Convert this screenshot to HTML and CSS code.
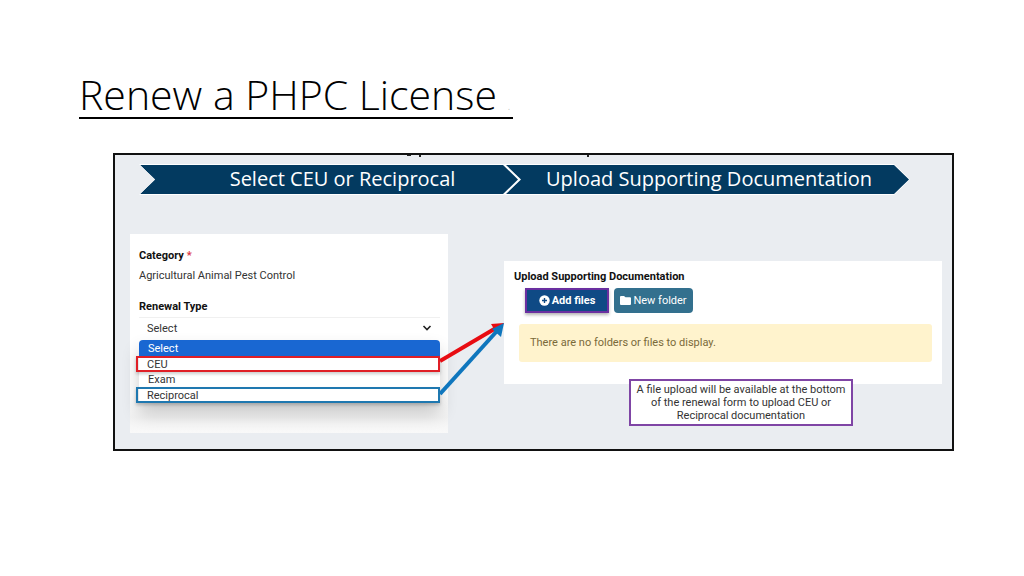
FILE: index.html
```html
<!DOCTYPE html>
<html lang="en">

<head>
    <meta charset="UTF-8">
    <meta name="viewport" content="width=device-width, initial-scale=1.0">
    <title>Renew a PHPC License</title>
    <link rel="stylesheet" href="styles.css">
  </head>
  <body>
    <h1 class="title">Renew a PHPC License <span class="title-dot">.</span></h1>

    <main class="guide">
      <svg class="cut-text" width="190" height="3" viewBox="0 0 190 3" aria-hidden="true">
        <path d="M2 0h4M15 0v2M183 0v2" stroke="#222" stroke-width="2" fill="none"/>
      </svg>

      <ol class="steps">
        <li class="step step-first"><span>Select CEU or Reciprocal</span></li>
        <li class="step step-last"><span>Upload Supporting Documentation</span></li>
      </ol>

      <div class="columns">
        <section class="card form-card">
          <p class="label">Category <span class="required">*</span></p>
          <p class="value">Agricultural Animal Pest Control</p>
          <label class="label" for="renewal">Renewal Type</label>
          <div class="select-wrap">
            <select id="renewal" class="select">
              <option>Select</option>
              <option>CEU</option>
              <option>Exam</option>
              <option>Reciprocal</option>
            </select>
            <svg class="caret" width="10" height="6" viewBox="0 0 10 6" aria-hidden="true">
              <path d="M1.5 1l3.5 3.5L8.500 1" fill="none" stroke="#222" stroke-width="1.600"/>
            </svg>
          </div>
          <div class="menu">
            <ul class="options" role="listbox" aria-label="Renewal Type">
              <li class="option option-active" role="option" aria-selected="true">Select</li>
              <li class="option option-ceu" role="option">CEU</li>
              <li class="option" role="option">Exam</li>
              <li class="option option-reciprocal" role="option">Reciprocal</li>
            </ul>
            <!-- arrows from the two marked options to the upload card -->
            <svg class="arrows" width="64" height="76" viewBox="0 0 64 76" aria-hidden="true">
              <path d="M0 38L56 5" stroke="#e80c12" stroke-width="4"/>
              <path d="M64 0L51 1L57 11z" fill="#e80c12"/>
              <path d="M0 71L57 8" stroke="#0f76bd" stroke-width="4"/>
              <path d="M64 0L52 6L61 14z" fill="#0f76bd"/>
            </svg>
          </div>
        </section>

        <div class="upload">
          <section class="card upload-card">
            <h2 class="label">Upload Supporting Documentation</h2>
            <div class="buttons">
              <button type="button" class="btn btn-add">
                <svg width="11" height="11" viewBox="0 0 11 11" aria-hidden="true">
                  <circle cx="5.500" cy="5.500" r="5.200" fill="#fff"/>
                  <path d="M5.500 3v5M3 5.500h5" stroke="#0f4a85" stroke-width="1.400"/>
                </svg>
                Add files
              </button>
              <button type="button" class="btn btn-folder">
                <svg width="11" height="9" viewBox="0 0 11 9" aria-hidden="true">
                  <path d="M1 0h3l1.500 1.300H10q1 0 1 1V8q0 1-1 1H1Q0 9 0 8V1q0-1 1-1z" fill="#fff"/>
                </svg>
                New folder
              </button>
            </div>
            <p class="empty">There are no folders or files to display.</p>
          </section>
          <p class="note">A file upload will be available at the bottom of the renewal form to upload CEU or Reciprocal documentation</p>
        </div>
      </div>
    </main>
  </body>
</html>
```
FILE: styles.css
```css
* {
  box-sizing: border-box;
}
body {
  font-family: Roboto, "Noto Sans", sans-serif;
  font-size: 11px;
  color: #333;
  background-color: #fff;
  margin: 0;
  padding: 71px 70px 0 79px;
}
h1, h2, p, ul, ol {
  margin: 0;
  padding: 0;
}
ul, ol {
  list-style: none;
}
.title {
  width: fit-content;
  padding-right: 3px;
  font-family: "Open Sans", sans-serif;
  font-size: 41px;
  font-weight: 300;
  line-height: 46px;
  color: #000;
  border-bottom: 2px solid #000;
}
.title-dot {
  font-size: 12px;
  line-height: 12px;
  color: #bbb;
}
.guide {
  position: relative;
  margin: 34px 0 0 34px;
  padding: 9px 10px 16px 15px;
  border: 2px solid #111;
  background-color: #eaedf1;
}
.cut-text {
  position: absolute;
  top: 0;
  left: 290px;
}
.steps {
  display: grid;
  grid-template-columns: 381fr 390fr;
  margin: 0 32px 0 9px;
}
.step {
  position: relative;
  height: 31px;
  line-height: 29px;
  font-family: "Open Sans", sans-serif;
  font-size: 20px;
  color: #fff;
  text-align: center;
  background-color: #fff;
  clip-path: polygon(0 0, calc(100% - 16px) 0, 100% 50%, calc(100% - 16px) 100%, 0 100%, 16px 50%);
}
.step::before {
  content: "";
  position: absolute;
  inset: 1px;
  background-color: #033a60;
  clip-path: polygon(0 0, calc(100% - 15px) 0, 100% 50%, calc(100% - 15px) 100%, 0 100%, 15px 50%);
}
.step-first::before {
  right: 2px;
}
.step-last::before {
  left: 2px;
}
.step span {
  position: relative;
}
.step-first {
  padding-left: 26px;
}
.step-last {
  margin-left: -16px;
  padding-left: 4px;
}
.columns {
  display: grid;
  grid-template-columns: 318fr 438fr;
  gap: 56px;
  margin-top: 39px;
}
.card {
  background-color: #fff;
}
.form-card {
  padding: 12px 8px 30px 9px;
  background-image: linear-gradient(#fff 80%, #f2f2f2 92%, #f9f9f9);
}
.label {
  display: block;
  font-size: 11px;
  font-weight: 700;
  line-height: 20px;
  color: #111;
}
.required {
  color: #dc3545;
}
.value {
  line-height: 20px;
  margin-bottom: 11px;
}
.select-wrap {
  position: relative;
  height: 23px;
  border-top: 1px solid #f0f0f0;
}
.select {
  display: block;
  width: 100%;
  height: 20px;
  padding: 0 8px;
  border: none;
  background-color: #fff;
  font: inherit;
  color: #333;
  appearance: none;
}
.caret {
  position: absolute;
  top: 7px;
  right: 8px;
}
.menu {
  position: relative;
}
.options {
  border-radius: 4px 4px 0 0;
  background-color: #fff;
  box-shadow: 0 10px 18px rgba(0, 0, 0, 0.2);
}
.option {
  height: 15px;
  line-height: 15px;
  padding: 0 9px;
}
.option-active {
  height: 16px;
  line-height: 17px;
  border-radius: 4px 4px 0 0;
  background-color: #1967d2;
  color: #fff;
}
.option-ceu, .option-reciprocal {
  height: 16px;
  line-height: 13px;
  margin-left: -3px;
  border: 2px solid #e01f26;
  box-shadow: 0 2px 3px rgba(0, 0, 0, 0.2);
}
.option-reciprocal {
  border-color: #1f78b0;
}
.arrows {
  position: absolute;
  top: -17px;
  left: 100%;
}
.upload {
  padding-top: 27px;
}
.upload-card {
  padding: 6px 10px 22px;
}
.buttons {
  display: flex;
  align-items: center;
  gap: 5px;
  padding: 1px 11px 11px;
}
.btn {
  display: flex;
  align-items: center;
  justify-content: center;
  gap: 2px;
  padding: 0;
  font: inherit;
  line-height: 16px;
  color: #fff;
  cursor: pointer;
}
.btn-add {
  width: 84px;
  height: 25px;
  border: 2px solid #6a2fa0;
  background-color: #0f4a85;
  font-weight: 700;
  box-shadow: 0 2px 3px rgba(0, 0, 0, 0.3);
}
.btn-folder {
  width: 79px;
  height: 25px;
  border: none;
  border-radius: 4px;
  background-color: #33708e;
}
.empty {
  margin-left: 5px;
  padding: 11px;
  line-height: 16px;
  border-radius: 3px;
  background-color: #fff3cd;
  color: #7a6a3a;
}
.note {
  position: relative;
  width: 224px;
  margin: -5px 0 0 125px;
  padding: 2px 4px;
  border: 2px solid #7f45a5;
  background-color: #fff;
  line-height: 13px;
  text-align: center;
}
```
